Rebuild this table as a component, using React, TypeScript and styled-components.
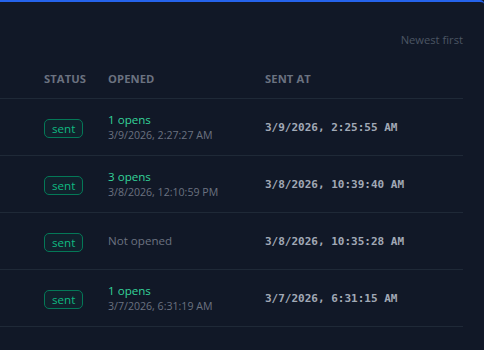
import React from "react";
import styled, { createGlobalStyle } from "styled-components";

const GlobalStyle = createGlobalStyle`
  html, body {
    margin: 0;
    padding: 0;
    background: #111827;
  }
  body {
    font-family: "Open Sans", "Noto Sans", sans-serif;
    -webkit-font-smoothing: antialiased;
  }
`;

interface SendRow {
  opens: number;
  openedAt?: string;
  sentAt: string;
}

const rows: SendRow[] = [
  { opens: 1, openedAt: "3/9/2026, 2:27:27 AM", sentAt: "3/9/2026, 2:25:55 AM" },
  { opens: 3, openedAt: "3/8/2026, 12:10:59 PM", sentAt: "3/8/2026, 10:39:40 AM" },
  { opens: 0, sentAt: "3/8/2026, 10:35:28 AM" },
  { opens: 1, openedAt: "3/7/2026, 6:31:19 AM", sentAt: "3/7/2026, 6:31:15 AM" },
];

const Panel = styled.div`
  min-height: 350px;
  box-sizing: border-box;
  border-top: 2px solid #2563eb;
  border-top-right-radius: 4px;
  background: #111827;
  overflow: hidden;
`;

const Toolbar = styled.div`
  display: flex;
  justify-content: flex-end;
  width: 463px;
  padding-top: 30px;
  font-size: 11.2px;
  line-height: 16px;
  color: #4b5563;
`;

const Table = styled.div`
  width: 463px;
`;

const Row = styled.div<{ $head?: boolean }>`
  display: grid;
  grid-template-columns: 44px 64px 157px 1fr;
  align-items: center;
  box-sizing: border-box;
  border-bottom: 1px solid #1f2937;
  ${(p) =>
    p.$head
      ? `padding: 23px 0 11px;`
      : `height: 57px;`}
`;

const HeadCell = styled.div`
  font-size: 11.2px;
  line-height: 16px;
  font-weight: 700;
  letter-spacing: 0.01em;
  text-transform: uppercase;
  color: #6b7280;
`;

const Cell = styled.div`
  min-width: 0;
`;

const Badge = styled.span`
  display: inline-flex;
  align-items: center;
  height: 19px;
  box-sizing: border-box;
  padding: 0 7px;
  border: 1px solid #047857;
  border-radius: 5px;
  background: rgba(16, 185, 129, 0.06);
  font-size: 11.6px;
  color: #10b981;
`;

const Opens = styled.div`
  font-size: 11.6px;
  line-height: 16px;
  color: #34d399;
`;

const OpenedAt = styled.div`
  font-size: 10.6px;
  line-height: 14px;
  color: #6b7280;
`;

const NotOpened = styled.div`
  font-size: 11.6px;
  line-height: 16px;
  color: #6b7280;
`;

const SentAt = styled.div`
  font-family: "DejaVu Sans Mono", "Liberation Mono", monospace;
  font-size: 11px;
  font-weight: 700;
  color: #a1a9b6;
`;

export default function App() {
  return (
    <>
      <GlobalStyle />
      <Panel>
        <Toolbar>Newest first</Toolbar>
        <Table>
          <Row $head>
            <Cell />
            <HeadCell>Status</HeadCell>
            <HeadCell>Opened</HeadCell>
            <HeadCell>Sent at</HeadCell>
          </Row>
          {rows.map((r, i) => (
            <Row key={i}>
              <Cell />
              <Cell>
                <Badge>sent</Badge>
              </Cell>
              <Cell>
                {r.opens > 0 ? (
                  <>
                    <Opens>{r.opens} opens</Opens>
                    <OpenedAt>{r.openedAt}</OpenedAt>
                  </>
                ) : (
                  <NotOpened>Not opened</NotOpened>
                )}
              </Cell>
              <SentAt>{r.sentAt}</SentAt>
            </Row>
          ))}
        </Table>
      </Panel>
    </>
  );
}
